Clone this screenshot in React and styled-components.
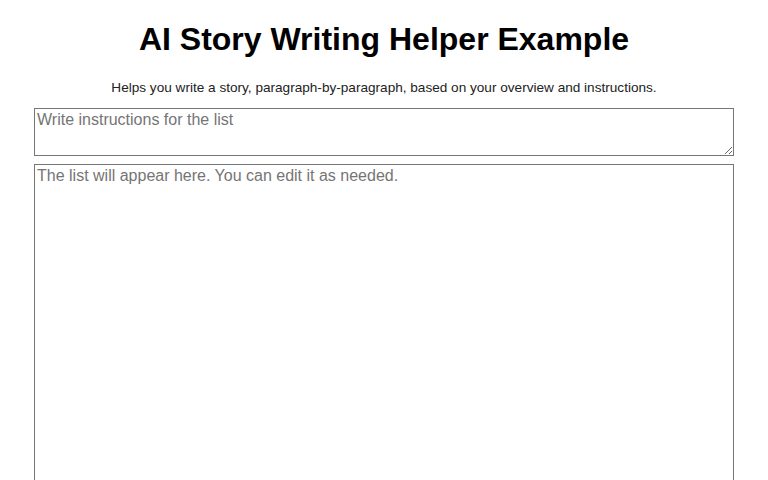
import React from "react";
import styled, { createGlobalStyle } from "styled-components";

const Global = createGlobalStyle`
  body {
    margin: 0;
    background: #fff;
    font-family: "Liberation Sans", Arial, sans-serif;
  }
`;

const Page = styled.div`
  max-width: 700px;
  margin: 0 auto;
  padding-top: 21px;
`;

const Title = styled.h1`
  font-size: 32px;
  font-weight: bold;
  text-align: center;
  margin: 0;
  color: #000;
`;

const Subtitle = styled.p`
  font-size: 13.6px;
  text-align: center;
  color: #222;
  margin: 22px 0 12.6px;
`;

const TextArea = styled.textarea`
  display: block;
  box-sizing: border-box;
  width: 100%;
  height: ${(p) => p.$h}px;
  margin: 0 0 8px;
  padding: 2px;
  border: 1px solid #767676;
  font-family: "Liberation Sans", Arial, sans-serif;
  font-size: 16px;
  color: #000;
  resize: ${(p) => (p.$resize ? "vertical" : "none")};
  &::placeholder {
    color: #757575;
  }
`;

export default function App() {
  return (
    <>
      <Global />
      <Page>
        <Title>AI Story Writing Helper Example</Title>
        <Subtitle>
          Helps you write a story, paragraph-by-paragraph, based on your overview and instructions.
        </Subtitle>
        <TextArea $h={48} $resize placeholder="Write instructions for the list" />
        <TextArea $h={400} placeholder="The list will appear here. You can edit it as needed." />
      </Page>
    </>
  );
}
